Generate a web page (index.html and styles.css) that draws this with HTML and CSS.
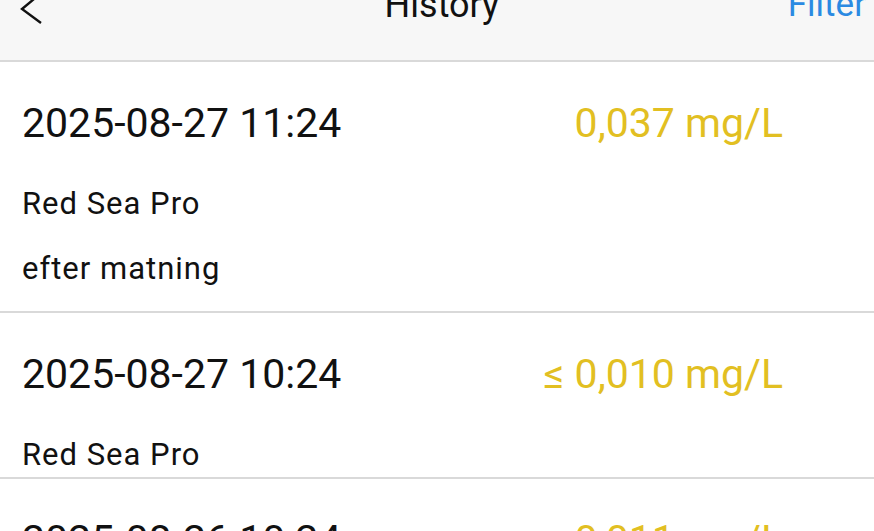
FILE: index.html
```html
<!DOCTYPE html>
<html lang="en">
  <head>
    <meta charset="UTF-8" />
    <meta name="viewport" content="width=device-width, initial-scale=1.0" />
    <title>History</title>
    <link rel="stylesheet" href="styles.css">
  </head>
  <body>
    <header class="topbar">
      <button class="back" aria-label="Back">
        <svg width="30" height="40" viewBox="0 0 30 40">
          <polyline points="20,2 2,17 21,31" fill="none" stroke="#111" stroke-width="2.4" />
        </svg>
      </button>
      <h1 class="title">History</h1>
      <button class="filter">Filter</button>
    </header>
    <main class="list">
      <div class="row">
        <div class="row-top">
          <span class="date">2025-08-27 11:24</span>
          <span class="amount">0,037 mg/L</span>
        </div>
        <div class="meta">
          <div class="line">Red Sea Pro</div>
          <div class="line note">efter matning</div>
        </div>
      </div>
      <div class="row">
        <div class="row-top">
          <span class="date">2025-08-27 10:24</span>
          <span class="amount">&le; 0,010 mg/L</span>
        </div>
        <div class="meta">
          <div class="line">Red Sea Pro</div>
        </div>
      </div>
      <div class="row">
        <div class="row-top">
          <span class="date">2025-08-26 10:24</span>
          <span class="amount">0,011 mg/L</span>
        </div>
        <div class="meta">
          <div class="line">Red Sea Pro</div>
        </div>
      </div>
    </main>
  </body>
</html>
```
FILE: styles.css
```css
body {
  margin: 0;
  padding: 0;
  background-color: white;
  font-family: Roboto, "Liberation Sans", sans-serif;
  color: #111;
  overflow: hidden;
}
.topbar {
  display: flex;
  align-items: flex-end;
  height: 62px;
  padding: 0 8px 37px 20px;
  box-sizing: border-box;
  background-color: #f7f7f7;
  border-bottom: 2px solid #d9d9d9;
}
.back {
  border: none;
  background: none;
  padding: 0;
  margin-bottom: -9px;
  width: 30px;
  height: 40px;
}
.back svg {
  display: block;
}
.title {
  flex: 1;
  margin: 0;
  text-align: center;
  font-size: 36px;
  font-weight: normal;
  line-height: 36px;
  padding-left: 46px;
}
.filter {
  border: none;
  background: none;
  padding: 0;
  font-family: inherit;
  font-size: 35px;
  line-height: 36px;
  color: #2b8ae2;
}
.row {
  padding: 37px 91px 5px 22px;
  border-bottom: 2px solid #d9d9d9;
}
.row-top {
  display: flex;
  justify-content: space-between;
  line-height: 48px;
}
.date {
  font-size: 41px;
}
.amount {
  font-size: 41px;
  color: #e2bf22;
}
.meta {
  display: flex;
  flex-direction: column;
  gap: 31px;
  margin-top: 40px;
}
.line {
  font-size: 31px;
  line-height: 34px;
  letter-spacing: 1px;
}
.note {
  margin-bottom: 20px;
}
```
